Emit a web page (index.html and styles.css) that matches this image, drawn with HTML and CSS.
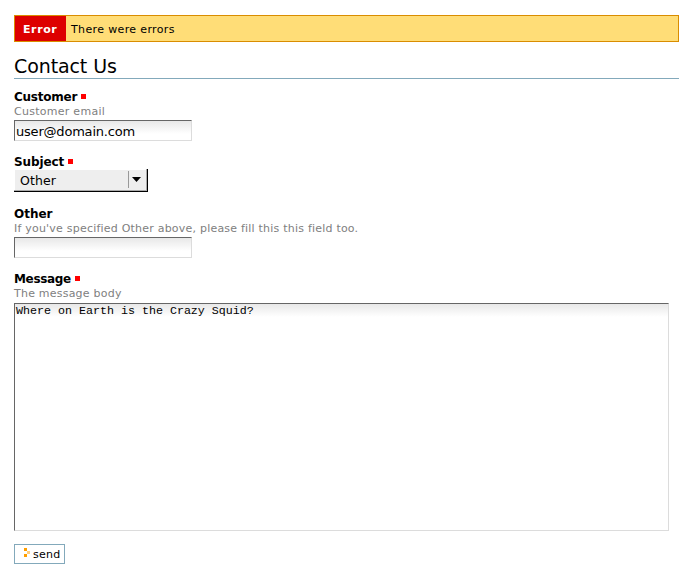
FILE: index.html
```
<!DOCTYPE html>
<html lang="en">
<head>
<meta charset="utf-8">
<title>Contact Us</title>
<link rel="stylesheet" href="styles.css">
</head>
<body>
<div class="notice"><strong class="notice-tag">Error</strong><span class="notice-text">There were errors</span></div>
<h1 class="title"><span>Contact Us</span></h1>
<form class="form">
  <div class="field customer">
    <label class="label" for="customer"><span>Customer</span><i class="required"></i></label>
    <p class="help"><span>Customer email</span></p>
    <input class="input" id="customer" type="text" value="user@domain.com">
  </div>
  <div class="field subject">
    <label class="label"><span>Subject</span><i class="required"></i></label>
    <div class="select"><span class="select-value">Other</span>
      <svg class="select-arrow" width="9" height="5" viewBox="0 0 9 5"><path d="M0 0h9L4.500 5z"/></svg>
    </div>
  </div>
  <div class="field other">
    <label class="label" for="other"><span>Other</span></label>
    <p class="help"><span>If you've specified Other above, please fill this this field too.</span></p>
    <input class="input" id="other" type="text">
  </div>
  <div class="field message">
    <label class="label" for="message"><span>Message</span><i class="required"></i></label>
    <p class="help"><span>The message body</span></p>
    <textarea class="input textarea" id="message" spellcheck="false">Where on Earth is the Crazy Squid?</textarea>
  </div>
  <button class="send" type="button"><svg width="6" height="9" viewBox="0 0 6 9" shape-rendering="crispEdges"><path fill="#ff9f00" d="M0 0h3v3H0zM0 6h3v3H0z"/><path fill="#ffcf80" d="M3 3h3v3H3z"/></svg><span>send</span></button>
</form>
</body>
</html>
```
FILE: styles.css
```
* { box-sizing: border-box; }
body {
  margin: 0;
  padding: 15px 15px 0 14px;
  background: #fff;
  color: #000;
  font: 11px/15px "DejaVu Sans", sans-serif;
}
.notice {
  display: flex;
  height: 27px;
  border: 1px solid #d98d00;
  background: #ffdd77;
  line-height: 27px;
}
.notice-tag {
  width: 51px;
  height: 25px;
  padding-left: 8px;
  background: #d00;
  color: #fff;
  letter-spacing: 0.6px;
}
.notice-text {
  padding-left: 5px;
  letter-spacing: 0.36px;
}
.title {
  height: 37px;
  margin: 0;
  padding-top: 12px;
  border-bottom: 1px solid #83a9bb;
  font-size: 19px;
  font-weight: normal;
  line-height: 24px;
  letter-spacing: -0.1px;
}
.form { padding-top: 10px; }
.label {
  display: flex;
  align-items: center;
  gap: 4px;
  height: 15px;
  font-size: 12px;
  font-weight: bold;
  letter-spacing: -0.24px;
}
.label span { padding-top: 2px; }
.other .label { letter-spacing: 0; }
.subject .label { letter-spacing: -0.12px; }
.message .label { letter-spacing: -0.34px; }
.required { width: 5px; height: 5px; background: #f00; }
.help {
  height: 14px;
  margin: 0;
  color: #808080;
  line-height: 15px;
  letter-spacing: 0.27px;
}
.other .help { letter-spacing: 0.215px; }
.message .help { letter-spacing: 0.22px; }
.input {
  display: block;
  width: 178px;
  height: 21px;
  margin: 2px 0 0;
  padding: 2px 1px 0;
  border: 1px solid;
  border-color: #666 #dcdcdc #dcdcdc #666;
  border-radius: 0;
  outline: 0;
  background: linear-gradient(#e8e8e8, #fff 13px) no-repeat;
  color: #000;
  font: 13px/18px "DejaVu Sans", sans-serif;
  letter-spacing: -0.2px;
}
.customer, .other { height: 65px; }
.subject { height: 52px; }
.select {
  display: flex;
  align-items: center;
  width: 134px;
  height: 23px;
  padding-left: 6px;
  border: solid #000;
  border-width: 0 1px 1px 0;
  background: #eee;
  box-shadow: inset -1px -1px #aaa, inset 1px 1px #fff;
  font-size: 12.5px;
  letter-spacing: 0.1px;
}
.select-value { width: 108px; }
.select-arrow {
  box-sizing: content-box;
  margin-top: -1px;
  padding: 6px 0 6px 3px;
  border-left: 1px solid #999;
}
.textarea {
  width: 655px;
  height: 228px;
  margin-top: 3px;
  padding: 0 1px;
  overflow: hidden;
  resize: none;
  font: 11.667px/14px "Courier 10 Pitch", "Liberation Mono", monospace;
  letter-spacing: 0;
}
.send {
  display: flex;
  align-items: center;
  gap: 3px;
  width: 51px;
  height: 20px;
  margin-top: 13px;
  padding: 0 0 0 9px;
  border: 1px solid #83a9bb;
  background: #fff;
  color: #000;
  font: 11px/18px "DejaVu Sans", sans-serif;
  letter-spacing: 0.25px;
}
.send svg { margin-top: -3px; }
.send span { padding-top: 1px; }
```
